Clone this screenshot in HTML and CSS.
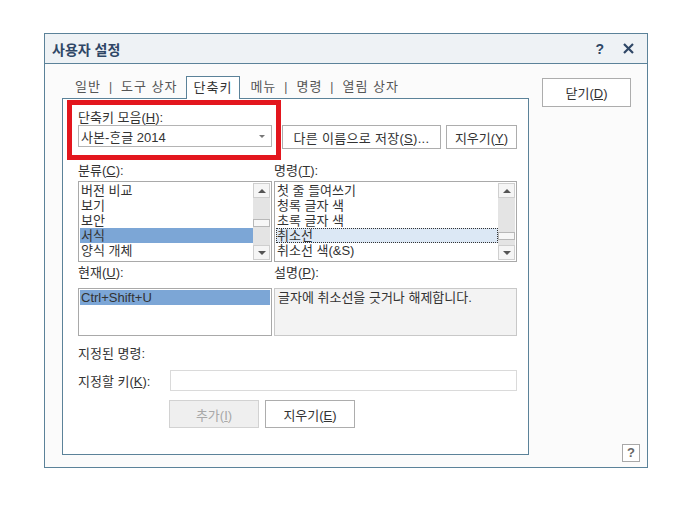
FILE: index.html
```html
<!DOCTYPE html>
<html lang="ko">
<head>
<meta charset="UTF-8">
<title>사용자 설정</title>
<link rel="stylesheet" href="styles.css">
</head>
<body>

<div class="dialog">
    <div class="titlebar">
        <span class="title">사용자 설정</span>
        <span class="title-btns">
            <span class="tb-help">?</span>
            <svg class="tb-close" width="11" height="11" viewBox="0 0 11 11"><path d="M1 1 L10 10 M10 1 L1 10" stroke="#2e4766" stroke-width="2.2"/></svg>
        </span>
    </div>

    <div class="content">
        <div class="main">
            <div class="tabs">
                <span class="tab">일반</span><span class="sep">|</span>
                <span class="tab">도구 상자</span>
                <span class="tab active">단축키</span>
                <span class="tab">메뉴</span><span class="sep">|</span>
                <span class="tab">명령</span><span class="sep">|</span>
                <span class="tab">열림 상자</span>
            </div>

            <div class="panel">
                <div class="highlight-box"></div>

                <div class="label">단축키 모음(<u>H</u>):</div>
                <div class="set-row">
                    <div class="combo">
                        <span>사본-ᄒᆞᆫ글 2014</span>
                        <span class="combo-arrow"></span>
                    </div>
                    <button class="btn save-as">다른 이름으로 저장(<u>S</u>)...</button>
                    <button class="btn del-set">지우기(<u>Y</u>)</button>
                </div>

                <div class="grid two-col lists-labels">
                    <div class="label">분류(<u>C</u>):</div>
                    <div class="label">명령(<u>T</u>):</div>
                </div>
                <div class="grid two-col">
                    <div class="listbox">
                        <div class="items">
                            <div class="item">버전 비교</div>
                            <div class="item">보기</div>
                            <div class="item">보안</div>
                            <div class="item selected">서식</div>
                            <div class="item">양식 개체</div>
                        </div>
                        <div class="scrollbar">
                            <div class="sb-btn"><span class="tri up"></span></div>
                            <div class="sb-track"><div class="sb-thumb thumb-a"></div></div>
                            <div class="sb-btn"><span class="tri down"></span></div>
                        </div>
                    </div>
                    <div class="listbox">
                        <div class="items">
                            <div class="item">첫 줄 들여쓰기</div>
                            <div class="item">청록 글자 색</div>
                            <div class="item">초록 글자 색</div>
                            <div class="item focused">취소선</div>
                            <div class="item">취소선 색(&amp;S)</div>
                        </div>
                        <div class="scrollbar">
                            <div class="sb-btn"><span class="tri up"></span></div>
                            <div class="sb-track"><div class="sb-thumb thumb-b"></div></div>
                            <div class="sb-btn"><span class="tri down"></span></div>
                        </div>
                    </div>
                </div>

                <div class="grid two-col current-labels">
                    <div class="label">현재(<u>U</u>):</div>
                    <div class="label">설명(<u>P</u>):</div>
                </div>
                <div class="grid two-col">
                    <div class="keybox">
                        <div class="item selected">Ctrl+Shift+U</div>
                    </div>
                    <div class="descbox">글자에 취소선을 긋거나 해제합니다.</div>
                </div>

                <div class="label assigned">지정된 명령:</div>

                <div class="key-row">
                    <span class="key-label">지정할 키(<u>K</u>):</span>
                    <div class="key-input"></div>
                </div>

                <div class="action-row">
                    <button class="btn action" disabled>추가(<u>I</u>)</button>
                    <button class="btn action">지우기(<u>E</u>)</button>
                </div>
            </div>
        </div>

        <div class="side">
            <button class="btn close">닫기(<u>D</u>)</button>
            <span class="help">?</span>
        </div>
    </div>
</div>

</body>
</html>
```

FILE: styles.css
```css
body {
    margin: 0;
    background: #fff;
    font-family: "Liberation Sans", "Noto Sans CJK KR", sans-serif;
    font-size: 13px;
    color: #333;
}

.dialog {
    margin: 33px 0 0 44px;
    width: 604px;
    height: 435px;
    box-sizing: border-box;
    border: 1px solid #5b8299;
    background: #fbfbfb;
    display: flex;
    flex-direction: column;
}

.titlebar {
    height: 29px;
    flex: none;
    border-bottom: 1px solid #5b8299;
    background: #eef2f5;
    display: flex;
    align-items: center;
    justify-content: space-between;
    padding: 0 13px 0 7px;
}

.title {
    font-weight: bold;
    font-size: 14px;
    color: #2e4766;
}

.title-btns {
    display: flex;
    align-items: center;
    gap: 19px;
}

.tb-help {
    font-weight: bold;
    font-size: 14px;
    color: #2e4766;
}

.content {
    flex: 1;
    display: flex;
}

.main {
    padding: 12px 0 0 17px;
}

.tabs {
    display: flex;
    height: 22px;
    padding-left: 5px;
    color: #555;
    letter-spacing: 1px;
}

.tab {
    padding: 0 8px;
    line-height: 22px;
    height: 22px;
}

.tab.active {
    position: relative;
    z-index: 1;
    height: 22px;
    padding: 0 7px;
    margin-right: 2px;
    background: #fff;
    border: 1px solid #5b8299;
    border-bottom: none;
    color: #333;
}

.sep {
    line-height: 22px;
    font-size: 12px;
}

.panel {
    position: relative;
    width: 467px;
    height: 357px;
    box-sizing: border-box;
    border: 1px solid #5b8299;
    background: #fff;
    padding: 12px 0 0 15px;
}

.highlight-box {
    position: absolute;
    left: 4px;
    top: 1px;
    width: 214px;
    height: 60px;
    box-sizing: border-box;
    border: 5px solid #e3161e;
}

.label {
    line-height: 14px;
    height: 14px;
    white-space: nowrap;
}

.set-row {
    display: flex;
    align-items: flex-start;
    height: 24px;
}

.combo {
    width: 194px;
    height: 22px;
    box-sizing: border-box;
    border: 1px solid #b4b4b4;
    display: flex;
    align-items: center;
    justify-content: space-between;
    padding: 0 6px 0 2px;
    margin-right: 10px;
}

.combo-arrow {
    width: 0;
    height: 0;
    border-left: 3px solid transparent;
    border-right: 3px solid transparent;
    border-top: 3px solid #777;
}

.btn {
    font: inherit;
    color: #333;
    background: #fff;
    border: 1px solid #adadad;
    padding: 0;
    box-sizing: border-box;
    white-space: nowrap;
}

.save-as {
    width: 159px;
    height: 24px;
    margin-right: 5px;
    letter-spacing: 0.3px;
}

.del-set {
    width: 71px;
    height: 24px;
}

.grid.two-col {
    display: grid;
    grid-template-columns: 194px 243px;
    column-gap: 2px;
}

.lists-labels {
    margin-top: 15px;
    margin-bottom: 3px;
}

.listbox {
    height: 81px;
    box-sizing: border-box;
    border: 1px solid #a9a9a9;
    display: flex;
    padding: 1px;
}

.items {
    flex: 1;
    overflow: hidden;
}

.item {
    height: 15px;
    line-height: 15px;
    padding-left: 1px;
    white-space: nowrap;
}

.item.selected {
    background: #7ca6d6;
}

.item.focused {
    background: #dce8f5;
    outline: 1px dotted #333;
    outline-offset: -1px;
}

.scrollbar {
    width: 17px;
    display: flex;
    flex-direction: column;
    background: #e4e4e4;
}

.sb-btn {
    height: 15px;
    box-sizing: border-box;
    border: 1px solid #cfcfcf;
    background: #f5f5f5;
    display: flex;
    align-items: center;
    justify-content: center;
}

.sb-track {
    flex: 1;
    position: relative;
}

.sb-thumb {
    position: absolute;
    left: 0;
    right: 0;
    height: 8px;
    box-sizing: border-box;
    border: 1px solid #b8b8b8;
    background: #f7f7f7;
}

.thumb-a {
    top: 21px;
}

.thumb-b {
    top: 34px;
}

.tri {
    width: 0;
    height: 0;
    border-left: 4px solid transparent;
    border-right: 4px solid transparent;
}

.tri.up {
    border-bottom: 4px solid #555;
}

.tri.down {
    border-top: 4px solid #555;
}

.current-labels {
    margin-top: 4px;
    margin-bottom: 8px;
}

.keybox {
    height: 48px;
    box-sizing: border-box;
    border: 1px solid #a9a9a9;
    padding: 1px;
}

.descbox {
    height: 48px;
    box-sizing: border-box;
    border: 1px solid #c8c8c8;
    background: #f3f3f3;
    padding: 1px 3px;
    line-height: 15px;
}

.assigned {
    margin-top: 11px;
}

.key-row {
    display: flex;
    align-items: center;
    margin-top: 9px;
    height: 21px;
}

.key-label {
    width: 92px;
    white-space: nowrap;
}

.key-input {
    width: 347px;
    height: 21px;
    box-sizing: border-box;
    border: 1px solid #dadada;
    background: #fff;
}

.action-row {
    display: flex;
    gap: 6px;
    margin-top: 9px;
    padding-left: 91px;
}

.btn.action {
    width: 90px;
    height: 28px;
}

.btn.action:disabled {
    background: #efefef;
    border-color: #d2d2d2;
    color: #a8a8a8;
}

.side {
    flex: 1;
    display: flex;
    flex-direction: column;
    justify-content: space-between;
    padding: 14px 7px 5px 13px;
}

.btn.close {
    align-self: flex-start;
    width: 89px;
    height: 29px;
}

.help {
    align-self: flex-end;
    width: 18px;
    height: 18px;
    box-sizing: border-box;
    border: 1px solid #a8a8a8;
    text-align: center;
    line-height: 16px;
    font-weight: bold;
    color: #666;
    background: #fff;
}
```
